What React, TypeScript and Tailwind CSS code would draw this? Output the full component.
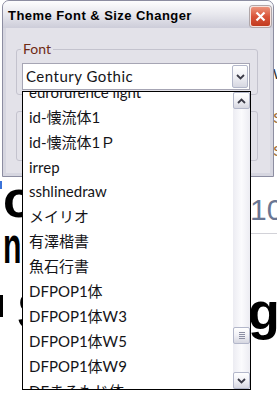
import React from 'react';

const fontItems = [
    'eurofurence light',
    'id-懐流体1',
    'id-懐流体1Ｐ',
    'irrep',
    'sshlinedraw',
    'メイリオ',
    '有澤楷書',
    '魚石行書',
    'DFPOP1体',
    'DFPOP1体W3',
    'DFPOP1体W5',
    'DFPOP1体W9',
    'DFまるもじ体',
];

const Chevron = ({ up }: { up?: boolean }) => (
    <svg className="block" height="6" viewBox="0 0 9 6" width="9">
        <path
            d={up ? 'M1 5 L4.5 1.5 L8 5' : 'M1 1 L4.5 4.5 L8 1'}
            fill="none"
            stroke="#3a3a46"
            strokeWidth="1.8"
        />
    </svg>
);

const XpButton = ({ children, className }: { children?: React.ReactNode; className: string }) => (
    <div
        className={`flex items-center justify-center rounded-[2px] border border-[#b3b7ca] bg-gradient-to-b from-white via-[#f0f0f5] to-[#d6d7e1] ${className}`}
    >
        {children}
    </div>
);

const DropdownList = () => (
    <div className="absolute left-[19px] top-[90px] z-10 flex h-[299px] w-[229px] border border-black bg-white">
        <div className="flex-1 overflow-hidden">
            <div className="-mt-[12.5px] flex flex-col">
                {fontItems.map((name) => (
                    <div
                        className="flex h-[24.95px] shrink-0 items-center whitespace-nowrap pl-[6px] text-[15px] text-[#141418]"
                        key={name}
                    >
                        {name}
                    </div>
                ))}
            </div>
        </div>
        <div className="flex w-[17px] flex-col bg-gradient-to-r from-[#ececf2] via-[#fbfbfd] to-[#ececf2]">
            <XpButton className="h-[17px] w-[17px]">
                <Chevron up />
            </XpButton>
            <div className="h-[218px]" />
            <XpButton className="h-[17px] w-[17px] flex-col gap-[1px]">
                <div className="h-px w-[6px] bg-[#8b8ea2]" />
                <div className="h-px w-[6px] bg-[#8b8ea2]" />
                <div className="h-px w-[6px] bg-[#8b8ea2]" />
                <div className="h-px w-[6px] bg-[#8b8ea2]" />
            </XpButton>
            <div className="flex-1" />
            <XpButton className="h-[17px] w-[17px]">
                <Chevron />
            </XpButton>
        </div>
    </div>
);

const ThemeWindow = () => (
    <div className="absolute left-[2px] top-0 h-[177px] w-[272px] rounded-t-[7px] border border-[#8c8da1] bg-[#d6d6e0]">
        <div className="flex h-[27px] items-center justify-between rounded-t-[6px] bg-gradient-to-b from-[#fdfdfe] via-[#e7e7ed] to-[#cdcdd9] pl-[5px] pr-[2px] pt-[3px]">
            <span className="font-['Liberation_Sans',sans-serif] text-[13px] font-bold tracking-[0.45px] text-black">
                Theme Font &amp; Size Changer
            </span>
            <div className="flex h-[21px] w-[21px] items-center justify-center rounded-[3px] border border-[#f6e2dc] bg-gradient-to-b from-[#ec937b] via-[#d9553a] to-[#c23a1e] shadow-[0_0_0_1px_#b0a6a8]">
                <svg height="11" viewBox="0 0 11 11" width="11">
                    <path d="M1.5 1.5 L9.5 9.5 M9.5 1.5 L1.5 9.5" stroke="white" strokeWidth="2.2" />
                </svg>
            </div>
        </div>
        <div className="px-[3px] pb-[3px]">
            <div className="h-[145px] bg-[#e3e2e9] pl-[10px] pt-[21px]">
                <div className="relative h-[46px] w-[242px] rounded-[3px] border border-[#c4c3ce]">
                    <span className="absolute -top-[9px] left-[4px] bg-[#e3e2e9] px-[2px] text-[14px] leading-[16px] text-[#6e2a14]">
                        Font
                    </span>
                    <div className="pl-[5px] pt-[13px]">
                        <div className="flex h-[27px] w-[228px] items-center border border-[#a6a5b4] bg-white">
                            <span className="pl-[3px] text-[15px] tracking-[0.5px] text-[#141418]">Century Gothic</span>
                            <XpButton className="ml-auto mr-[1px] h-[23px] w-[16px]">
                                <Chevron />
                            </XpButton>
                        </div>
                    </div>
                </div>
                <div className="mt-[16px] h-[50px] w-[242px] rounded-[3px] border border-[#c4c3ce]" />
            </div>
        </div>
        <DropdownList />
    </div>
);

export default function App() {
    return (
        <div className="relative h-[394px] w-[277px] overflow-hidden bg-white font-['Lato','Noto_Sans_CJK_JP',sans-serif]">
            <div className="flex flex-col font-['Liberation_Sans',sans-serif]">
                <div className="flex h-[173px] justify-end">
                    <div className="flex w-[4px] flex-col overflow-hidden text-[15px] leading-[16px]">
                        <span className="mt-[66px] text-[#333]">W</span>
                        <span className="mt-[28px] text-[#9a6a30]">S</span>
                        <span className="mt-[17px] text-[#9a6a30]">S</span>
                    </div>
                </div>
                <div className="flex h-[46px]">
                    <div className="mt-[8px] h-[8px] w-[2px] bg-[#3b73d9]" />
                    <span className="ml-[1px] text-[52px] font-bold leading-[52px] text-black">o</span>
                    <div className="ml-auto w-[27px] overflow-visible">
                        <span className="mt-[22px] block whitespace-nowrap text-[30px] leading-[30px] text-[#6a7693]">
                            10
                        </span>
                    </div>
                </div>
                <div className="flex h-[66px]">
                    <span className="ml-[3px] inline-block origin-left scale-x-[0.58] text-[52px] font-bold leading-[52px] text-black">
                        n
                    </span>
                    <div className="ml-auto mt-[14px] h-px w-[27px] bg-[#d2d2d8]" />
                </div>
                <div className="flex h-[60px]">
                    <div className="mt-[10px] h-[22px] w-[3px] bg-black" />
                    <span className="ml-[14px] text-[52px] font-bold leading-[52px] text-black">S</span>
                    <div className="ml-auto w-[29px]">
                        <span className="block text-[52px] font-bold leading-[52px] text-black">g</span>
                    </div>
                </div>
            </div>
            <ThemeWindow />
        </div>
    );
}
